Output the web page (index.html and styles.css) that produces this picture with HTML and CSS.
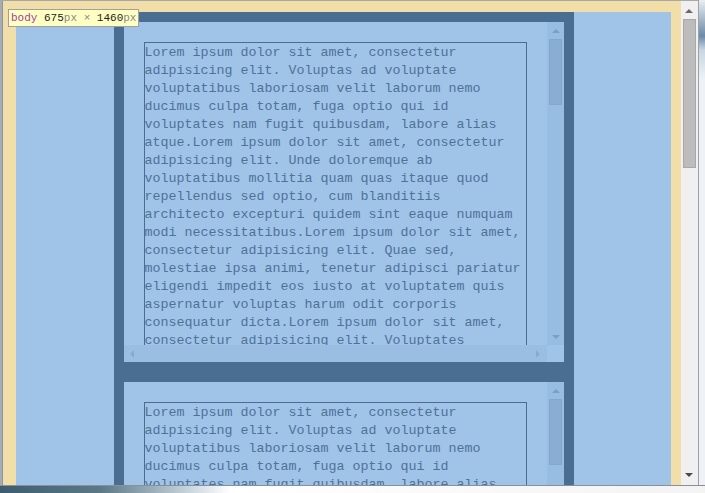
FILE: index.html
```html
<!DOCTYPE html>
<html>
<head>
<meta charset="utf-8">
<link rel="stylesheet" href="styles.css">
</head>
<body>
<div class="frame">
  <div class="edge-top"></div>
  <div class="edge-left"></div>
  <div class="viewport">
    <main class="page">
      <section class="box">
        <div class="pane">
          <div class="scroller">
            <div class="text">Lorem ipsum dolor sit amet, consectetur adipisicing elit. Voluptas ad voluptate voluptatibus laboriosam velit laborum nemo ducimus culpa totam, fuga optio qui id voluptates nam fugit quibusdam, labore alias atque.Lorem ipsum dolor sit amet, consectetur adipisicing elit. Unde doloremque ab voluptatibus mollitia quam quas itaque quod repellendus sed optio, cum blanditiis architecto excepturi quidem sint eaque numquam modi necessitatibus.Lorem ipsum dolor sit amet, consectetur adipisicing elit. Quae sed, molestiae ipsa animi, tenetur adipisci pariatur eligendi impedit eos iusto at voluptatem quis aspernatur voluptas harum odit corporis consequatur dicta.Lorem ipsum dolor sit amet, consectetur adipisicing elit. Voluptates perspiciatis quas dolorum praesentium sapiente, nemo quos ab aliquid modi.</div>
          </div>
          <div class="vbar">
            <span class="arrow up"></span>
            <span class="thumb"></span>
            <span class="arrow down"></span>
          </div>
          <div class="hbar">
            <span class="arrow left"></span>
            <span class="arrow right"></span>
          </div>
          <div class="corner"></div>
        </div>
      </section>
      <section class="box">
        <div class="pane">
          <div class="scroller">
            <div class="text">Lorem ipsum dolor sit amet, consectetur adipisicing elit. Voluptas ad voluptate voluptatibus laboriosam velit laborum nemo ducimus culpa totam, fuga optio qui id voluptates nam fugit quibusdam, labore alias atque.Lorem ipsum dolor sit amet, consectetur adipisicing elit. Unde doloremque ab voluptatibus mollitia quam quas itaque quod repellendus sed optio, cum blanditiis architecto excepturi quidem sint eaque numquam modi necessitatibus.</div>
          </div>
          <div class="vbar">
            <span class="arrow up"></span>
            <span class="thumb"></span>
            <span class="arrow down"></span>
          </div>
          <div class="hbar">
            <span class="arrow left"></span>
            <span class="arrow right"></span>
          </div>
          <div class="corner"></div>
        </div>
      </section>
    </main>
    <div class="tooltip"><span class="tag">body</span> <span class="num">675</span><span class="unit">px</span> <span class="unit">×</span> <span class="num">1460</span><span class="unit">px</span></div>
  </div>
  <div class="mainbar">
    <span class="m-arrow m-up"></span>
    <span class="m-thumb"></span>
    <span class="m-arrow m-down"></span>
  </div>
  <div class="edge-right"></div>
  <div class="edge-bottom"></div>
</div>
</body>
</html>
```
FILE: styles.css
```css
html, body {
  margin: 0;
  padding: 0;
  width: 705px;
  height: 493px;
  overflow: hidden;
  background: #eef2f6;
}

.frame {
  display: grid;
  grid-template-columns: 3px 678px 17px 7px;
  grid-template-rows: 1px 484px 8px;
  width: 705px;
  height: 493px;
}

.edge-top {
  grid-column: 1 / 4;
  grid-row: 1;
  background: #a8a8a8;
}

.edge-left {
  grid-column: 1;
  grid-row: 2;
  background: #a4adb6;
  border-right: 1px solid #8e959c;
}

.viewport {
  grid-column: 2;
  grid-row: 2;
  position: relative;
  overflow: hidden;
  background: #f2dea9;
  padding: 11px 10px 0 13px;
}

.page {
  display: flex;
  flex-direction: column;
  align-items: center;
  background: #a0c4e8;
  height: 1460px;
}

.box {
  width: 440px;
  border: 10px solid #4a6d92;
}

.pane {
  display: grid;
  grid-template-columns: 423px 17px;
  grid-template-rows: 323px 17px;
  background: #a0c4e8;
}

.scroller {
  overflow: hidden;
  padding: 20px 20px 0 20px;
}

.text {
  border: 1px solid #4a6d92;
  color: #4f7198;
  font-family: "Liberation Mono", monospace;
  font-size: 13.34px;
  line-height: 18px;
  padding-top: 1px;
}

.vbar {
  position: relative;
  background: #98bde2;
}

.hbar {
  position: relative;
  background: #9abee2;
}

.corner {
  background: #a0c4e8;
}

.thumb {
  position: absolute;
  left: 2px;
  top: 17px;
  width: 11px;
  height: 64px;
  background: #8aaed3;
  border: 1px solid #84a8cd;
}

.arrow {
  position: absolute;
  width: 0;
  height: 0;
}

.arrow.up {
  left: 5px;
  top: 7px;
  border-left: 4px solid transparent;
  border-right: 4px solid transparent;
  border-bottom: 4px solid #7d9ec4;
}

.arrow.down {
  left: 5px;
  bottom: 6px;
  border-left: 4px solid transparent;
  border-right: 4px solid transparent;
  border-top: 4px solid #7d9ec4;
}

.arrow.left {
  left: 6px;
  top: 5px;
  border-top: 4px solid transparent;
  border-bottom: 4px solid transparent;
  border-right: 4px solid #88a9ce;
}

.arrow.right {
  right: 7px;
  top: 5px;
  border-top: 4px solid transparent;
  border-bottom: 4px solid transparent;
  border-left: 4px solid #88a9ce;
}

.tooltip {
  position: absolute;
  left: 5px;
  top: 8px;
  height: 16px;
  padding: 0 2px;
  background: #ffffc4;
  border: 1px solid #a0a0a0;
  font-family: "Liberation Mono", monospace;
  font-size: 11px;
  line-height: 16px;
  color: #222;
  white-space: nowrap;
}

.tag { color: #a3409e; }
.num { color: #222; }
.unit { color: #888; }

.mainbar {
  grid-column: 3;
  grid-row: 2;
  position: relative;
  background: #f0f0f0;
}

.m-thumb {
  position: absolute;
  left: 2px;
  top: 18px;
  width: 11px;
  height: 147px;
  background: #bcbcbc;
  border: 1px solid #a8a8a8;
}

.m-arrow {
  position: absolute;
  width: 0;
  height: 0;
  left: 4px;
}

.m-up {
  top: 8px;
  border-left: 4px solid transparent;
  border-right: 4px solid transparent;
  border-bottom: 4px solid #6a6a6a;
}

.m-down {
  bottom: 8px;
  border-left: 4px solid transparent;
  border-right: 4px solid transparent;
  border-top: 4px solid #4a4a4a;
}

.edge-right {
  grid-column: 4;
  grid-row: 1 / 3;
  border-left: 1px solid #a0a0a0;
  background: linear-gradient(to bottom, #e9eef3 0, #6d8aa6 36px, #c8d6e4 50px, #eef2f6 80px, #eef2f6 100%);
}

.edge-bottom {
  grid-column: 1 / 5;
  grid-row: 3;
  border-top: 1px solid #8a9096;
  background: linear-gradient(to right, #3d5d6e 0, #5a7888 100px, #c9d6de 190px, #ffffff 230px, #f3f3f3 100%);
}
```
